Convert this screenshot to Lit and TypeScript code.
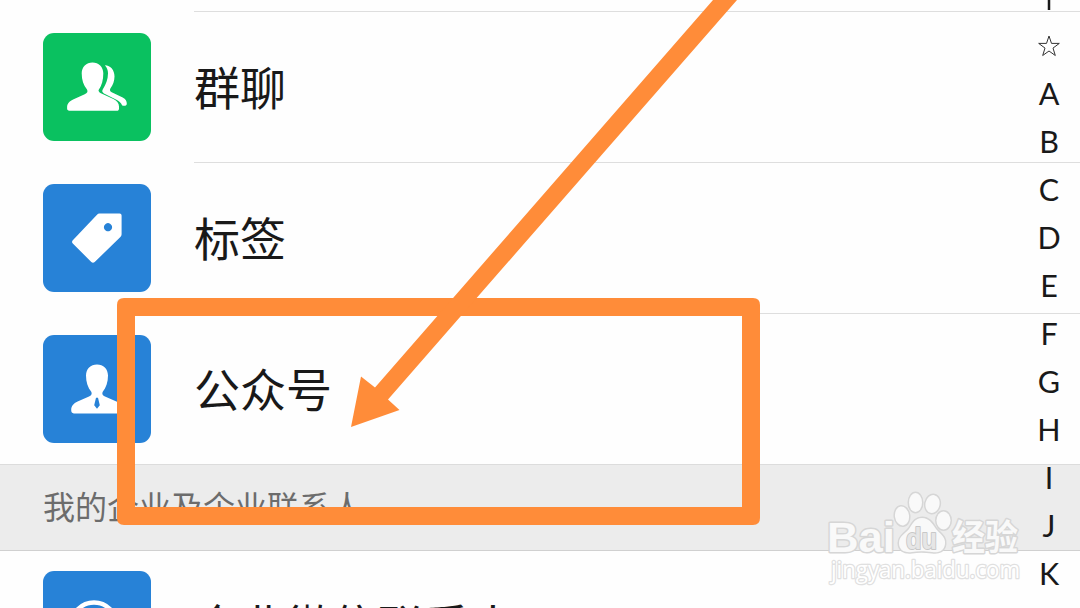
import { LitElement, html, css, svg } from "lit";
import { customElement, property } from "lit/decorators.js";

const icons: Record<string, unknown> = {
  group: svg`
    <path fill="#fff" d="M49.500 29.400c6.200 0 10.800 4.400 10.800 10.800c0 6.600-1.400 12.400-4.800 17c.2 1.300 1 2.300 2.400 3l12.500 5.800c3.600 1.800 5.600 4.200 5.600 7.400v2c0 1.600-.8 2.300-2.200 2.300H26.300c-1.400 0-2.200-.7-2.200-2.100v-1.400c0-3.800 2.200-6 6-7.800l11.600-5.200c2.600-1.200 3.400-2.800 2.300-4.800c-3.600-4.200-5.300-9.600-5.300-16.200c0-6.400 4.600-10.800 10.800-10.800z"/>
    <path fill="#fff" d="M61.800 32.200c6 .2 9.700 5 9.700 11.300c0 4.600-1.600 8.600-4 11.700c-1 1.600-.6 3 1.200 4l11 5.200c3 1.600 4.200 3.800 4.100 6.300c-.1 2-2 2.700-4.600 1.700c-1.200-2.700-3.400-4.500-5.800-5.600L62 61c-3-1.500-3.200-3-2-5c2.800-4.400 5-9.600 5-15.800c0-3.200-1-5.600-3.200-8z"/>`,
  tag: svg`
    <path fill="#fff" fill-rule="evenodd" d="M56.500 29.500H76.600q2 0 2 2v18.800q0 1.600-1.200 2.800L51.700 78q-1.700 1.500-3.400 0L29.800 59.500q-1.500-1.600 0-3.200L54 30.700q1-1.200 2.500-1.200zM65 39.100a4.100 4.100 0 1 0 .01 0z"/>`,
  official: svg`
    <path fill="#fff" fill-rule="evenodd" d="M54 29.600c6.400 0 11 4.400 11 11c0 6.600-1.800 12.200-5.400 16.400c-.8 2 .2 3.600 2.400 4.600l11.400 5c4 1.800 6.400 4.400 6.400 8.500c0 2.200-.9 3.300-2.600 3.300H30.800c-1.700 0-2.600-1.100-2.600-3.300c0-4.100 2.400-6.700 6.400-8.500l11.400-5c2.200-1 3.200-2.600 2.400-4.600c-3.600-4.200-5.400-9.800-5.400-16.400c0-6.600 4.600-11 11-11zM53 62.800l-1.800 7.400l2.800 3.600l2.800-3.600l-1.800-7.400z"/>`,
  work: svg`
    <circle cx="51" cy="54" r="22.500" fill="none" stroke="#fff" stroke-width="4.500"/>`,
};

@customElement("contact-entry")
export class ContactEntry extends LitElement {
  @property() icon = "";
  @property() label = "";

  static styles = css`
    :host {
      display: flex;
      height: 151px;
      padding-left: 43px;
      box-sizing: border-box;
      gap: 43px;
    }
    .tile {
      width: 108px;
      height: 108px;
      margin-top: 21px;
      flex: none;
      border-radius: 11px;
      background: #2782d7;
    }
    .group {
      background: #0ac160;
    }
    .label {
      flex: 1;
      display: flex;
      align-items: center;
      box-sizing: border-box;
      padding-bottom: 4px;
      border-bottom: 1px solid #dedede;
      font-size: 46px;
      color: #191919;
    }
    :host([last]) .label {
      border-bottom-color: transparent;
    }
  `;

  render() {
    return html`
      <svg class="tile ${this.icon}" viewBox="0 0 108 108">${icons[this.icon]}</svg>
      <div class="label">${this.label}</div>
    `;
  }
}

@customElement("letter-index")
export class LetterIndex extends LitElement {
  static styles = css`
    :host {
      display: flex;
      flex-direction: column;
      font: 30.500px Lato, sans-serif;
      color: #191919;
    }
    .item {
      height: 48px;
      flex: none;
      display: flex;
      align-items: center;
      justify-content: center;
    }
    .letter {
      padding-bottom: 2px;
      box-sizing: border-box;
    }
    .icon {
      width: 24px;
      height: 24px;
    }
  `;

  render() {
    return html`
      <div class="item">
        <svg class="icon" viewBox="0 0 24 24">
          <path d="M12 25V2M5 9l7-7l7 7" fill="none" stroke="#191919" stroke-width="2.500"/>
        </svg>
      </div>
      <div class="item">
        <svg class="icon" viewBox="0 0 24 24">
          <path d="M12 2L14.500 9.400H22.300L16 14.100L18.300 21.500L12 17L5.700 21.500L8 14.100L1.700 9.400H9.500Z" fill="none" stroke="#333"/>
        </svg>
      </div>
      ${[..."ABCDEFGHIJK"].map((letter) => html`<div class="item letter">${letter}</div>`)}
    `;
  }
}

@customElement("app-root")
export class AppRoot extends LitElement {
  static styles = css`
    :host {
      display: block;
      position: relative;
      width: 1080px;
      height: 608px;
      overflow: hidden;
      background: #fefefe;
      font-family: "Noto Sans CJK SC", sans-serif;
    }
    .top {
      height: 11px;
      margin-left: 194px;
      border-bottom: 1px solid #dedede;
    }
    .section {
      display: flex;
      align-items: center;
      height: 87px;
      margin: -1px 0;
      box-sizing: border-box;
      padding: 0 0 6px 43px;
      background: #ececec;
      border-top: 1px solid #dcdcdc;
      border-bottom: 1px solid #d0d0d0;
      font-size: 32px;
      color: #6c6c6c;
    }
    .index {
      position: absolute;
      top: -26px;
      right: 0;
      width: 62px;
    }
    .overlay {
      position: absolute;
      inset: 0;
      width: 1080px;
      height: 608px;
    }
    .mark {
      fill: #f9f9f9;
      stroke: #d6d6d6;
      stroke-width: 3px;
      paint-order: stroke;
      stroke-linejoin: round;
    }
    .latin {
      font: bold 43px "Liberation Sans", sans-serif;
    }
    .hanzi {
      font: bold 35px "Noto Sans CJK SC", sans-serif;
    }
    .du {
      font: bold 29px "Liberation Sans", sans-serif;
      fill: #e6e6e6;
      stroke: #c8c8c8;
      stroke-width: 2px;
    }
    .site {
      font: 23px "Open Sans", sans-serif;
      fill: #fff;
      stroke: #e0e0e0;
      stroke-width: 2.500px;
    }
  `;

  render() {
    return html`
      <div class="top"></div>
      <contact-entry icon="group" label="群聊"></contact-entry>
      <contact-entry icon="tag" label="标签"></contact-entry>
      <contact-entry icon="official" label="公众号" last></contact-entry>
      <div class="section">我的企业及企业联系人</div>
      <contact-entry icon="work" label="企业微信联系人"></contact-entry>
      <letter-index class="index"></letter-index>
      <svg class="overlay" viewBox="0 0 1080 608">
        <g class="mark">
          <text class="latin" x="827" y="552" textLength="68" lengthAdjust="spacingAndGlyphs">Bai</text>
          <ellipse cx="902" cy="516" rx="7" ry="9.500" transform="rotate(-8 902 516)"/>
          <ellipse cx="915.500" cy="502.500" rx="6.500" ry="9.500"/>
          <ellipse cx="932.500" cy="504" rx="7" ry="9" transform="rotate(12 932.500 504)"/>
          <ellipse cx="943.500" cy="520.500" rx="7" ry="9"/>
          <path d="M922 518c7 0 10 5 14 11c4 5 10 8 9 15c-1 7-6 9-13 8c-8-1-14-1-20 0c-8 1-13-2-13-9c0-7 6-9 10-14c4-6 6-11 13-11z"/>
          <text class="du" x="906" y="549" textLength="31" lengthAdjust="spacingAndGlyphs">du</text>
          <text class="hanzi" x="952" y="550" textLength="66" lengthAdjust="spacingAndGlyphs">经验</text>
          <text class="site" x="831" y="578" textLength="189" lengthAdjust="spacingAndGlyphs">jingyan.baidu.com</text>
        </g>
        <path fill="#ff8c39" fill-rule="evenodd" d="M124 298H753q7 0 7 7V518q0 7-7 7H124q-7 0-7-7V305q0-7 7-7zM135 316V507H742V316z"/>
        <path fill="#ff8c39" d="M713 0H737L388 399.500L399.500 410L351 427L361 376.500L375 387.500Z"/>
      </svg>
    `;
  }
}
